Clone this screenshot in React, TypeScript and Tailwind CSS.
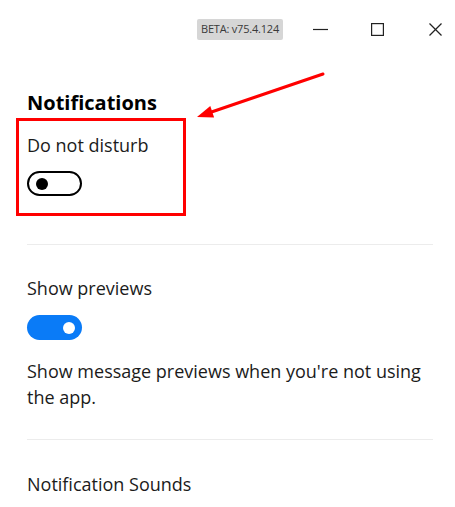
import React from "react";

function Toggle({ on }: { on: boolean }) {
  if (on) {
    return (
      <div className="w-[55px] h-[25px] rounded-full bg-[#0a7bf7] flex items-center justify-end pr-[7px]">
        <div className="w-[12px] h-[12px] rounded-full bg-white" />
      </div>
    );
  }
  return (
    <div className="w-[55px] h-[25px] rounded-full border-[2px] border-black flex items-center pl-[7px]">
      <div className="w-[12px] h-[12px] rounded-full bg-black" />
    </div>
  );
}

export default function App() {
  return (
    <div
      className="relative w-[455px] h-[507px] bg-white overflow-hidden text-[#1b1b1b]"
      style={{ fontFamily: '"Open Sans", "Noto Sans", sans-serif' }}
    >
      {/* title bar */}
      <div className="h-[58px] flex items-center justify-end pr-[13px]">
        <div className="h-[21px] px-[4px] bg-[#d6d6d6] rounded-[2px] flex items-center text-[11px] text-[#3a3a3a] tracking-[-0.2px] mr-[30px]">
          BETA: v75.4.124
        </div>
        <svg width="15" height="13" viewBox="0 0 15 13" className="mr-[43px]">
          <line x1="0" y1="6.5" x2="15" y2="6.5" stroke="#222" strokeWidth="1.2" />
        </svg>
        <svg width="13" height="13" viewBox="0 0 13 13" className="mr-[45px]">
          <rect x="0.6" y="0.6" width="11.8" height="11.8" fill="none" stroke="#222" strokeWidth="1.2" />
        </svg>
        <svg width="13" height="13" viewBox="0 0 13 13">
          <line x1="0.5" y1="0.5" x2="12.5" y2="12.5" stroke="#222" strokeWidth="1.2" />
          <line x1="12.5" y1="0.5" x2="0.5" y2="12.5" stroke="#222" strokeWidth="1.2" />
        </svg>
      </div>

      {/* content */}
      <div className="pl-[27px] pr-[22px]">
        <div className="mt-[32px] text-[20px] font-bold leading-[26px] text-black">Notifications</div>
        <div className="mt-[16px] text-[18px] leading-[26px]">Do not disturb</div>
        <div className="mt-[13px]">
          <Toggle on={false} />
        </div>
        <div className="mt-[48px] h-px bg-[#ececec]" />
        <div className="mt-[30px] text-[18px] leading-[26px]">Show previews</div>
        <div className="mt-[14px]">
          <Toggle on={true} />
        </div>
        <div className="mt-[18px] text-[18px] leading-[26px] max-w-[400px]">
          Show message previews when you're not using the app.
        </div>
        <div className="mt-[29px] h-px bg-[#ececec]" />
        <div className="mt-[31px] text-[18px] leading-[26px]">Notification Sounds</div>
      </div>

      {/* annotation: red box */}
      <div className="absolute left-[16px] top-[118px] w-[170px] h-[98px] border-[3px] border-[#ff0000]" />
      {/* annotation: arrow */}
      <svg className="absolute left-0 top-0" width="455" height="507" viewBox="0 0 455 507">
        <line x1="323" y1="74" x2="210" y2="112.5" stroke="#ff0000" strokeWidth="3" strokeLinecap="round" />
        <polygon points="197,117 214.1,117.5 210.3,106.1" fill="#ff0000" />
      </svg>
    </div>
  );
}
